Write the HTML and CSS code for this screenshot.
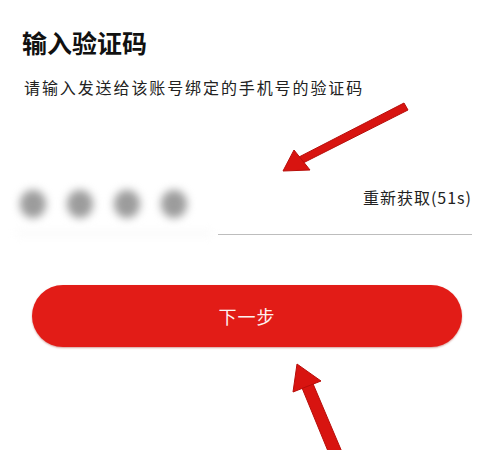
FILE: index.html
```html
<!DOCTYPE html>
<html lang="zh-CN">
<head>
<meta charset="utf-8">
<title>输入验证码</title>
<link rel="stylesheet" href="styles.css">
</head>
<body>
<div class="page">
  <h1 class="title">输入验证码</h1>
  <p class="subtitle">请输入发送给该账号绑定的手机号的验证码</p>
  <div class="code-row">
    <div class="dots">
      <span class="dot"></span>
      <span class="dot"></span>
      <span class="dot"></span>
      <span class="dot"></span>
    </div>
    <div class="resend-field">
      <span class="resend">重新获取(51s)</span>
    </div>
  </div>
  <button class="next-btn">下一步</button>
  <svg class="annotations" width="490" height="450" viewBox="0 0 490 450">
    <g fill="#d81410" stroke="#b80e0a" stroke-width="1" stroke-linejoin="round">
      <polygon points="404,103 408,110 303,163 299,157"/>
      <polygon points="283,171 294,150 310,170"/>
      <polygon points="300,383 311,379 342,452 330,456"/>
      <polygon points="297,364 293,392 321,381"/>
    </g>
  </svg>
</div>
</body>
</html>
```

FILE: styles.css
```css
html, body {
  margin: 0;
  padding: 0;
  background: #ffffff;
}

body {
  font-family: "Noto Sans CJK SC", "Noto Sans", sans-serif;
  color: #1a1a1a;
}

.page {
  position: relative;
  width: 490px;
  height: 450px;
  overflow: hidden;
  padding: 26px 18px 0 22px;
  box-sizing: border-box;
}

.title {
  margin: 0;
  font-size: 25px;
  line-height: 32px;
  font-weight: 700;
  color: #111;
}

.subtitle {
  margin: 17px 0 0 2px;
  font-size: 16px;
  line-height: 24px;
  letter-spacing: 1.9px;
  color: #222;
}

.code-row {
  display: flex;
  align-items: flex-end;
  margin: 80px 0 0 -6px;
  height: 56px;
}

.dots {
  display: flex;
  gap: 21px;
  width: 196px;
  height: 56px;
  padding: 11px 0 0 4px;
  box-sizing: border-box;
  border-bottom: 3px solid #f4f4f4;
  filter: blur(4.5px);
}

.dot {
  width: 26px;
  height: 28px;
  border-radius: 50%;
  background: #9c9c9c;
}

.resend-field {
  flex: 1;
  display: flex;
  justify-content: flex-end;
  align-items: flex-start;
  height: 56px;
  box-sizing: border-box;
  margin-left: 6px;
  border-bottom: 1.5px solid #bdbdbd;
}

.resend {
  margin-top: 6px;
  font-size: 16px;
  line-height: 24px;
  letter-spacing: 1px;
  color: #222;
}

.next-btn {
  display: block;
  width: 430px;
  height: 62px;
  margin: 50px 0 0 10px;
  border: none;
  border-radius: 31px;
  background: #e21c17;
  color: #fdf2f0;
  font-family: "Noto Sans CJK SC", "Noto Sans", sans-serif;
  font-size: 18px;
  letter-spacing: 1px;
  box-shadow: 0 1px 2px rgba(150, 20, 10, 0.4);
}

.annotations {
  position: absolute;
  left: 0;
  top: 0;
  pointer-events: none;
}
```
